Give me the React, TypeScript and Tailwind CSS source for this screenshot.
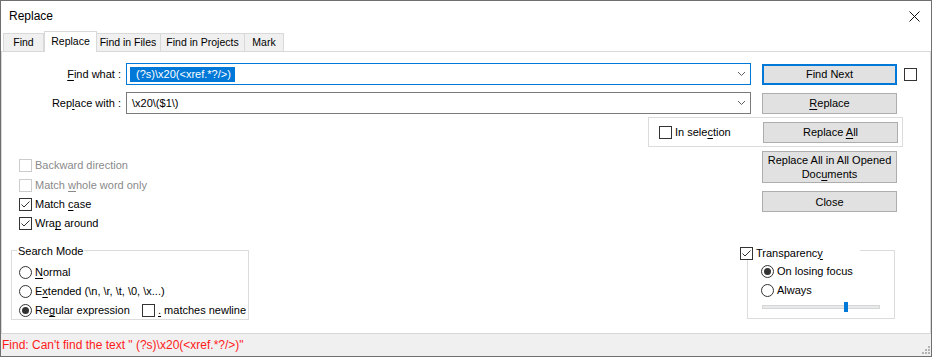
import React from "react";

function CheckBox({ checked = false, disabled = false }: { checked?: boolean; disabled?: boolean }) {
  return (
    <span
      className={`flex h-[13px] w-[13px] shrink-0 items-center justify-center border bg-white ${
        disabled ? "border-[#cccccc]" : "border-[#333333]"
      }`}
    >
      {checked && (
        <svg width="11" height="11" viewBox="0 0 11 11">
          <polyline points="1.5,5.5 4,8 9.5,2.5" fill="none" stroke="#333" strokeWidth="1" />
        </svg>
      )}
    </span>
  );
}

function Radio({ checked = false }: { checked?: boolean }) {
  return (
    <span className="flex h-[13px] w-[13px] shrink-0 items-center justify-center rounded-full border border-[#333333] bg-white">
      {checked && <span className="h-[7px] w-[7px] rounded-full bg-[#333333]" />}
    </span>
  );
}

function Btn({ children, tall = false, primary = false }: { children: React.ReactNode; tall?: boolean; primary?: boolean }) {
  return (
    <div
      className={`flex w-[135px] shrink-0 items-center justify-center bg-[#e1e1e1] text-center leading-[14px] ${
        tall ? "h-[32px]" : "h-[21px]"
      } ${primary ? "border-2 border-[#0078d7]" : "border border-[#adadad]"}`}
    >
      {children}
    </div>
  );
}

function Chevron() {
  return (
    <svg width="9" height="6" viewBox="0 0 9 6" className="mr-[4px]">
      <polyline points="1,1 4.5,4.5 8,1" fill="none" stroke="#606060" strokeWidth="1" />
    </svg>
  );
}

const tabs = ["Find", "Replace", "Find in Files", "Find in Projects", "Mark"];
const tabWidths = ["w-[41px]", "w-[53px]", "w-[65px]", "w-[85px]", "w-[40px]"];

export default function App() {
  return (
    <div className="flex h-[357px] w-[932px] flex-col border border-[#6f6f6f] bg-white font-['Liberation_Sans',Arial,sans-serif] text-[11px] text-black">
      {/* title bar */}
      <div className="flex h-[30px] shrink-0 items-center justify-between pl-[8px] pr-[8px]">
        <span className="text-[12px]">Replace</span>
        <svg width="11" height="11" viewBox="0 0 11 11" className="mr-[3px]">
          <line x1="0.5" y1="0.5" x2="10.5" y2="10.5" stroke="#111" strokeWidth="1" />
          <line x1="10.5" y1="0.5" x2="0.5" y2="10.5" stroke="#111" strokeWidth="1" />
        </svg>
      </div>

      {/* tabs */}
      <div className="flex h-[20px] shrink-0 items-end pl-[2px] text-[10.5px]">
        {tabs.map((t, i) =>
          t === "Replace" ? (
            <div
              key={t}
              className={`relative z-10 -mb-px flex h-[21px] ${tabWidths[i]} items-start justify-center border border-b-0 border-[#d9d9d9] bg-white pt-[2px]`}
            >
              {t}
            </div>
          ) : (
            <div
              key={t}
              className={`flex h-[18px] ${tabWidths[i]} items-center justify-center border border-b-0 border-[#d9d9d9] bg-[#f0f0f0] ${
                i === 2 ? "border-l-0" : ""
              } ${i === 0 ? "" : "-ml-px"}`}
            >
              {t}
            </div>
          )
        )}
      </div>

      {/* panel */}
      <div className="flex flex-1 flex-col border-x border-t border-[#d9d9d9] pt-[11px]">
        {/* find what */}
        <div className="flex h-[22px] items-center">
          <div className="w-[119px] text-right">
            <span className="underline underline-offset-2">F</span>ind what :
          </div>
          <div className="ml-[5px] flex h-[22px] w-[625px] items-center justify-between border border-[#0078d7] pl-[3px]">
            <span className="h-[15px] whitespace-pre bg-[#0078d7] pl-[3px] pr-[4px] leading-[15px] text-white">
              {" (?s)\\x20(<xref.*?/>)"}
            </span>
            <Chevron />
          </div>
          <div className="ml-[11px]">
            <Btn primary>Find Next</Btn>
          </div>
          <div className="ml-[7px]">
            <CheckBox />
          </div>
        </div>

        {/* replace with */}
        <div className="mt-[7px] flex h-[22px] items-center">
          <div className="w-[119px] text-right">
            Rep<span className="underline underline-offset-2">l</span>ace with :
          </div>
          <div className="ml-[5px] flex h-[22px] w-[625px] items-center justify-between border border-[#7a7a7a] pl-[5px]">
            <span className="whitespace-pre">{"\\x20\\($1\\)"}</span>
            <Chevron />
          </div>
          <div className="ml-[11px]">
            <Btn>
              <span>
                <span className="underline underline-offset-2">R</span>eplace
              </span>
            </Btn>
          </div>
        </div>

        <div className="mt-[3px] flex">
          {/* left column */}
          <div className="flex w-[646px] flex-col">
            <div className="ml-[17px] mt-[38px] flex flex-col">
              <div className="flex h-[20px] items-center gap-[3px] text-[#8a8a8a]">
                <CheckBox disabled />
                Backward direction
              </div>
              <div className="flex h-[20px] items-center gap-[3px] text-[#8a8a8a]">
                <CheckBox disabled />
                <span>
                  Match <span className="underline underline-offset-2">w</span>hole word only
                </span>
              </div>
              <div className="flex h-[19px] items-center gap-[3px]">
                <CheckBox checked />
                <span>
                  Match <span className="underline underline-offset-2">c</span>ase
                </span>
              </div>
              <div className="flex h-[19px] items-center gap-[3px]">
                <CheckBox checked />
                <span>
                  Wra<span className="underline underline-offset-2">p</span> around
                </span>
              </div>
            </div>

            {/* search mode */}
            <div className="ml-[9px] mt-[17px] h-[70px] w-[238px] border border-[#dcdcdc]">
              <div className="-mt-[7px] ml-[5px] w-fit bg-white px-[1px] leading-[14px]">Search Mode</div>
              <div className="ml-[7px] mt-[4px] flex flex-col">
                <div className="flex h-[20px] items-center gap-[3px]">
                  <Radio />
                  <span>
                    <span className="underline underline-offset-2">N</span>ormal
                  </span>
                </div>
                <div className="flex h-[19px] items-center gap-[3px]">
                  <Radio />
                  <span>
                    E<span className="underline underline-offset-2">x</span>
                    {"tended (\\n, \\r, \\t, \\0, \\x...)"}
                  </span>
                </div>
                <div className="flex h-[19px] items-center">
                  <div className="flex w-[123px] items-center gap-[3px]">
                    <Radio checked />
                    <span>
                      Re<span className="underline underline-offset-2">g</span>ular expression
                    </span>
                  </div>
                  <div className="flex items-center gap-[3px]">
                    <CheckBox />
                    <span>
                      <span className="underline underline-offset-2">.</span> matches newline
                    </span>
                  </div>
                </div>
              </div>
            </div>
          </div>

          {/* right column */}
          <div className="flex w-[255px] flex-col">
            <div className="flex h-[30px] items-center border border-[#dcdcdc] pl-[10px] pr-[4px]">
              <CheckBox />
              <span className="ml-[3px]">
                In sele<span className="underline underline-offset-2">c</span>tion
              </span>
              <div className="ml-auto">
                <Btn>
                  <span>
                    Replace <span className="underline underline-offset-2">A</span>ll
                  </span>
                </Btn>
              </div>
            </div>
            <div className="ml-[114px] mt-[4px]">
              <Btn tall>
                <span>
                  Replace All in All Opened
                  <br />
                  Doc<span className="underline underline-offset-2">u</span>ments
                </span>
              </Btn>
            </div>
            <div className="ml-[114px] mt-[8px]">
              <Btn>Close</Btn>
            </div>

            {/* transparency */}
            <div className="ml-[99px] mt-[38px] h-[69px] w-[148px] border border-[#dcdcdc]">
              <div className="-ml-[8px] -mt-[5px] flex h-[14px] w-[120px] items-center gap-[3px] bg-white">
                <CheckBox checked />
                <span>
                  Transparenc<span className="underline underline-offset-2">y</span>
                </span>
              </div>
              <div className="ml-[13px] mt-[2px] flex flex-col">
                <div className="flex h-[19px] items-center gap-[3px]">
                  <Radio checked />
                  On losing focus
                </div>
                <div className="flex h-[19px] items-center gap-[3px]">
                  <Radio />
                  Always
                </div>
              </div>
              <div className="relative ml-[14px] mt-[2px] flex h-[10px] w-[118px] items-center">
                <div className="h-[4px] w-full border border-[#d6d6d6] bg-[#e7eaea]" />
                <div className="absolute left-[82px] top-0 h-[10px] w-[4px] bg-[#0078d7]" />
              </div>
            </div>
          </div>
        </div>
      </div>

      {/* status bar */}
      <div className="flex h-[23px] shrink-0 items-center justify-between border-t border-[#d7d7d7] bg-[#f0f0f0] pl-[1px]">
        <span className="whitespace-pre text-[12px] text-[#ff1a1a]">
          {'Find: Can\'t find the text " (?s)\\x20(<xref.*?/>)"'}
        </span>
        <svg width="8" height="8" viewBox="0 0 8 8" className="mr-[1px] mt-[12px] self-start">
          <rect x="6" y="0" width="2" height="2" fill="#b4b4b4" />
          <rect x="3" y="3" width="2" height="2" fill="#b4b4b4" />
          <rect x="6" y="3" width="2" height="2" fill="#b4b4b4" />
          <rect x="0" y="6" width="2" height="2" fill="#b4b4b4" />
          <rect x="3" y="6" width="2" height="2" fill="#b4b4b4" />
          <rect x="6" y="6" width="2" height="2" fill="#b4b4b4" />
        </svg>
      </div>
    </div>
  );
}
